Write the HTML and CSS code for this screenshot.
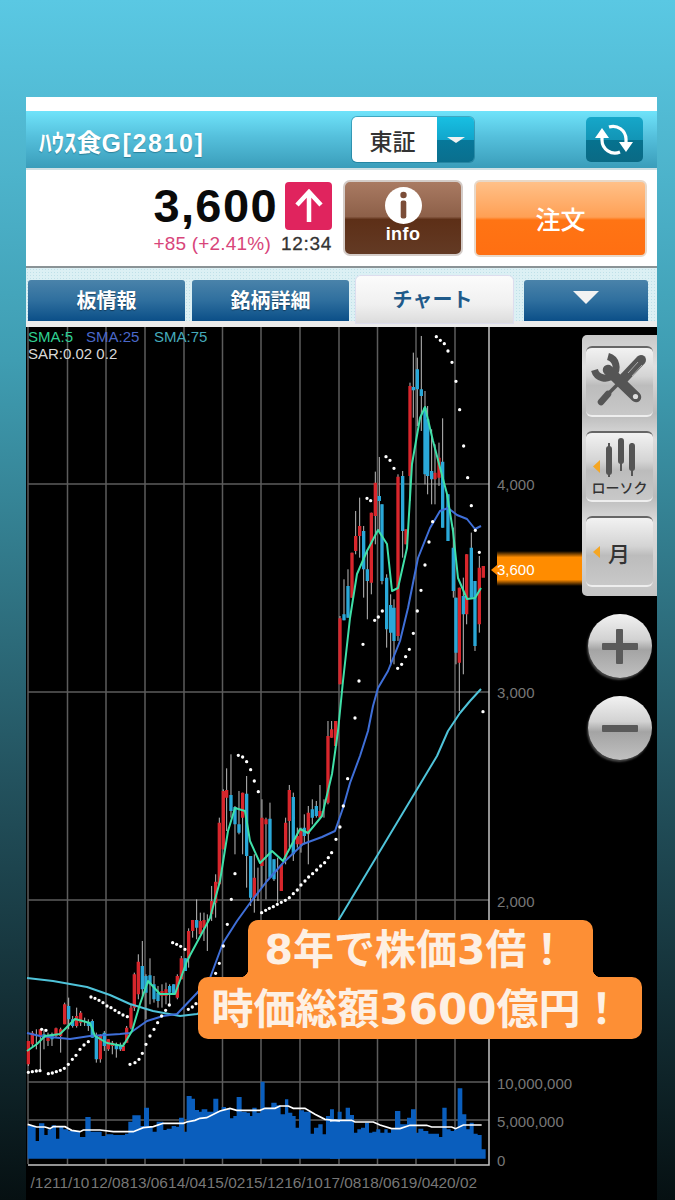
FILE: index.html
```html
<!DOCTYPE html>
<html lang="ja">
<head>
  <meta charset="UTF-8" />
  <title>ハウス食G チャート</title>
  <meta name="viewport" content="width=device-width, initial-scale=1.0"/>
  <link rel="stylesheet" href="styles.css">
</head>
<body>
  <div class="app">
    <div class="top-strip"></div>

    <!-- header -->
    <div class="header">
      <div class="title">ﾊｳｽ食<span class="title-code">G[2810]</span></div>
      <div class="market">
        <span class="market-name">東証</span>
        <span class="market-arrow"><i class="tri-down"></i></span>
      </div>
      <div class="refresh">
        <svg width="50" height="45" viewBox="0 0 50 45">
          <g fill="none" stroke="#fff" stroke-width="3.2">
            <path d="M12 18V23A13 13 0 0 0 30 35"/>
            <path d="M36 27V22A13 13 0 0 0 19 10"/>
          </g>
          <path d="M12 11L19 21H5ZM36 35L29 25H43Z" fill="#fff"/>
        </svg>
      </div>
    </div>

    <!-- price row -->
    <div class="quote-row">
      <div class="quote">
        <div class="quote-main">
          <span class="price">3,600</span>
          <span class="up-box">
            <svg width="28" height="34" viewBox="0 0 28 34"><path d="M14 33V4M2 16L14 3L26 16" fill="none" stroke="#fff" stroke-width="4.500"/></svg>
          </span>
        </div>
        <div class="quote-sub">
          <span class="change">+85 (+2.41%)</span>
          <span class="time">12:34</span>
        </div>
      </div>
      <div class="info-btn">
        <svg width="37" height="37" viewBox="0 0 37 37">
          <circle cx="18.5" cy="18.5" r="18.5" fill="#fff"/>
          <circle cx="18.5" cy="8" r="3.2" fill="#7b4d38"/>
          <rect x="15.7" y="13.500" width="5.600" height="18" rx="2" fill="#7b4d38"/>
        </svg>
        <span class="info-label">info</span>
      </div>
      <div class="order-btn">注文</div>
    </div>

    <!-- tabs -->
    <div class="tabs">
      <div class="tab">板情報</div>
      <div class="tab">銘柄詳細</div>
      <div class="tab tab-active">チャート</div>
      <div class="tab tab-more"><i class="tri-down tri-big"></i></div>
    </div>

    <!-- chart + tools -->
    <div class="chart">
      <svg class="plot" width="556" height="874" viewBox="26 326 556 874">
        <defs>
          <linearGradient id="tag" x1="0" y1="0" x2="0" y2="1">
            <stop offset="0" stop-color="#ff8c00" stop-opacity="0"/>
            <stop offset=".18" stop-color="#ff8c00"/>
            <stop offset=".82" stop-color="#ff8c00"/>
            <stop offset="1" stop-color="#ff8c00" stop-opacity="0"/>
          </linearGradient>
        </defs>

        <!-- grid -->
        <path class="grid" d="M28 326V1163M67.500 326V1163M106 326V1163M145 326V1163M184 326V1163M222.500 326V1163M261 326V1163M300 326V1163M339 326V1163M377.500 326V1163M416 326V1163M455 326V1163M28 483H489M28 691H489M28 899H489M28 1081H489M28 1119H489"/>
        <path class="axis" d="M489 326V1164H28"/>

        <!-- volume -->
        <path class="vol" transform="translate(0 1060) scale(.3333)" d="M83 293V195H107V240H117V187H133V222H143V205H155V193H168V233H178V195H190V205H205V210H240V228H256V168H272V212H305V225H318V220H340V222H375V218H385V182H397V163H422V195H432V140H447V197H458V212H470V182H490V207H500V203H515V195H528V197H537V170H552V212H560V105H575V113H585V147H597V152H605V145H622V152H640V113H655V150H665V138H678V143H690V172H700V165H710V108H725V152H740V155H750V165H757V140H770V155H782V62H794V140H814V125H830V133H842V160H855V115H865V155H877V165H887V200H897V148H912V152H932V218H942V200H955V190H968V220H978V165H990V145H1002V175H1020V293Z"/>
        <path class="vol" transform="translate(335 1060) scale(.3333)" d="M-15 293V175H8V152H20V180H32V140H45V162H57V215H67V205H78V200H90V185H102V215H112V212H124V205H136V215H148V205H158V215H168V205H180V150H196V190H216V170H228V145H243V215H250V203H265V210H280V218H312V228H322V140H335V205H347V210H357V205H368V82H382V160H394V205H404V185H416V218H428V222H440V265H452V293Z"/>
        <path class="vol-ma" transform="translate(0 1060) scale(.3333)" d="M83 190L110 198H135L150 203L160 197H195L215 208L240 212L250 207H300L340 212H400L430 200L460 197L490 187H550L560 183L585 178L600 172L620 170L660 150L690 142L710 148H780L795 142H825L840 135H865L880 142H915L945 160L975 175L1020 180"/>
        <path class="vol-ma" transform="translate(335 1060) scale(.3333)" d="M-15 180L0 178H50L60 183H115L135 192L170 203H195L225 193H275L290 198H350L362 203L385 192H440"/>

        <!-- left part of the candles, 3x traced -->
        <g transform="translate(20 720) scale(.3333)">
          <path class="wick" d="M25 960V1035M37 930V980M49 925V985M61 925V1050M72 925V985M84 935V975M96 935V975M108 920V950M122 920V995M134 845V910M146 830V925M158 885V920M170 860V920M182 870V915M194 890V915M205 895V930M217 895V950M229 935V1025M241 940V1025M253 930V990M265 955V990M277 960V1000M289 965V1010M301 965V990M310 965V990M320 915V965M333 850V925M343 755V870M355 700V835M367 660V830M378 760V895M390 712V850M402 765V845M414 795V860M426 790V860M438 785V850M449 790V850M461 790V820M472 760V835M484 705V775M496 712V750M506 622V740M518 597V650M530 535V655M541 575V630M552 575V660M562 580V690M575 495V600M587 460V590M598 290V480M610 205V385M620 142V330M633 100V290M645 255V400M657 210V340M668 215V400M680 165V500M692 405V555M703 400V575M714 440V540M726 235V500M738 290V535M750 245V470M762 415V480M773 410V545M784 430V510M797 290V430M808 192V380M820 215V420M832 320V380M843 320V395M853 280V370M865 255V430M877 235V310M889 240V290M900 192V290M912 235V290M924 0V250M935 0V50M947 0V75"/>
          <path class="bar-red" d="M25 960V1030M37 935V970M61 925V945M84 945V960M108 922V945M122 925V945M134 850V910M170 885V915M182 875V905M241 945V1015M265 955V985M277 965V975M310 975V990M320 920V965M333 860V920M343 760V860M355 722V820M426 810V825M438 805V825M472 765V830M484 712V775M506 630V712M518 597V630M541 600V640M552 597V620M575 540V580M587 482V545M598 305V490M610 210V385M620 207V230M668 215V290M703 470V530M726 290V435M738 295V310M784 432V510M797 305V410M808 207V300M832 345V370M843 325V370M865 275V340M900 270V290M924 45V245M935 25V50M947 0V75"/>
          <path class="bar-blue" d="M72 940V950M96 940V955M146 855V895M158 895V915M205 905V915M217 900V950M229 945V1015M253 935V975M289 970V985M301 975V985M367 735V805M378 765V815M390 763V790M402 790V835M414 815V840M449 795V815M461 790V820M496 712V750M530 597V620M633 222V270M645 258V310M657 310V335M680 218V405M692 405V530M750 293V470M762 415V475M820 228V400M853 320V345M877 265V290M889 255V285"/>
        </g>

        <!-- right part of the candles -->
        <g transform="translate(320 330) scale(.3333)">
          <path class="wick" d="M60 855V1060M72 745V868M84 715V860M96 665V800M107 540V670M119 500V680M131 585V800M142 655V865M154 545V790M166 422V640M178 378V600M186 520V760M200 730V950M212 790V1005M222 805V1000M234 430V930M248 420V680M258 595V640M270 155V510M280 65V260M292 80V285M304 15V300M315 180V460M323 225V490M335 295V520M345 340V520M357 335V465M368 262V590M384 490V630M400 590V800M408 800V1000M418 770V1140M430 740V1030M440 670V880M454 605V800M465 750V960M478 675V905"/>
          <path class="bar-red" d="M60 862V1060M96 665V800M107 615V660M119 585V615M154 545V755M166 455V555M234 437V915M258 595V640M270 165V435M345 425V445M357 380V440M418 770V995M440 670V850M478 710V880M490 705V740"/>
          <path class="bar-blue" d="M72 850V868M84 765V860M131 600V715M142 715V750M178 495V510M186 520V750M200 740V895M212 822V905M222 830V930M248 435V600M280 168V178M292 115V175M304 175V195M315 230V430M323 265V435M335 420V445M368 392V590M384 490V630M400 650V780M408 800V965M430 795V850M454 650V800M465 750V945"/>
        </g>

        <!-- moving averages -->
        <polyline class="sma75" points="27,977 53,980 87,986 110,994 130,1003 153,1010 180,1015 197,1013 250,990 300,960 338,920 350,900 365,875 380,850 395,825 410,800 425,775 437,755 448,730 460,712 470,700 481,688"/>
        <polyline class="sma25" points="27,1032 40,1035 70,1038 90,1035 120,1033 130,1032 147,1020 163,1015 177,1013 197,992 210,977 223,942 237,920 250,902 267,880 283,862 303,843 322,836 335,830 343,807 350,782 360,755 368,730 373,705 378,687 388,670 400,640 408,607 418,557 430,527 440,510 448,507 457,514 467,518 475,528 481,525"/>
        <polyline class="sma5" points="27,1050 37,1043 45,1035 60,1033 75,1018 90,1022 95,1035 107,1042 123,1045 132,1030 140,1003 148,980 160,993 175,993 187,960 210,917 220,880 228,830 235,807 245,810 250,840 260,862 272,850 283,860 300,828 308,832 322,815 332,773 338,730 343,680 350,617 357,573 367,550 378,529 387,543 392,590 398,587 407,547 412,463 420,417 425,406 433,440 447,493 453,530 458,577 467,598 475,597 481,587"/>

        <!-- parabolic SAR -->
        <path class="sar" transform="translate(20 720) scale(.3333)" d="M25 1054h0M37 1052h0M49 1050h0M60 1049h0M65 925h0M78 928h0M85 1058h0M97 1056h0M109 1052h0M121 1048h0M133 1042h0M145 1030h0M157 1015h0M168 1003h0M180 985h0M192 972h0M205 962h0M213 828h0M225 832h0M237 838h0M249 845h0M261 855h0M273 860h0M285 868h0M297 875h0M309 882h0M322 887h0M330 1030h0M345 1025h0M357 1015h0M367 997h0M378 970h0M390 945h0M402 925h0M413 905h0M425 885h0M437 868h0M448 852h0M458 665h0M470 670h0M482 676h0M495 685h0M505 865h0M517 858h0M528 848h0M587 757h0M598 727h0M610 675h0M622 610h0M634 535h0M645 458h0M655 103h0M668 108h0M680 122h0M692 146h0M703 180h0M715 212h0M725 575h0M737 568h0M748 562h0M760 557h0M772 550h0M784 544h0M796 538h0M808 530h0M820 518h0M832 507h0M843 492h0M855 480h0M866 468h0M878 458h0M890 447h0M902 435h0M914 425h0M925 410h0M935 395h0M948 355h0M960 318h0M970 255h0M983 173h0"/>
        <path class="sar" transform="translate(320 330) scale(.3333)" d="M349 17h0M361 28h0M373 38h0M384 60h0M396 94h0M408 151h0M419 236h0M431 345h0M443 440h0M454 524h0M466 598h0M478 664h0M489 1142h0M105 1161h0M117 1050h0M129 940h0M164 868h0M175 858h0M187 840h0M233 1012h0M245 1000h0M257 977h0M268 955h0M280 907h0M292 840h0M303 778h0M315 702h0M327 633h0M338 572h0M198 377h0M210 388h0M222 412h0M141 502h0M152 509h0"/>

        <!-- last price tag -->
        <rect x="497" y="550" width="85" height="35" fill="url(#tag)"/>
        <path d="M491 569L497 564V574Z" fill="#ff8c00"/>

        <!-- legend -->
        <text class="legend leg-5" x="28" y="341">SMA:5</text>
        <text class="legend leg-25" x="86" y="341">SMA:25</text>
        <text class="legend leg-75" x="154" y="341">SMA:75</text>
        <text class="legend leg-sar" x="28" y="358">SAR:0.02 0.2</text>

        <!-- right axis -->
        <text class="tick" x="497" y="489">4,000</text>
        <text class="tick tick-now" x="497" y="574">3,600</text>
        <text class="tick" x="497" y="697">3,000</text>
        <text class="tick" x="497" y="906">2,000</text>
        <text class="tick" x="497" y="1088">10,000,000</text>
        <text class="tick" x="497" y="1126">5,000,000</text>
        <text class="tick" x="497" y="1165">0</text>

        <!-- date axis -->
        <text class="date" x="30.600" y="1187">/12</text>
        <text class="date" x="52" y="1187">11/10</text>
        <text class="date" x="90.700" y="1187">12/08</text>
        <text class="date" x="129.400" y="1187">13/06</text>
        <text class="date" x="168.100" y="1187">14/04</text>
        <text class="date" x="206.800" y="1187">15/02</text>
        <text class="date" x="245.500" y="1187">15/12</text>
        <text class="date" x="284.200" y="1187">16/10</text>
        <text class="date" x="322.900" y="1187">17/08</text>
        <text class="date" x="361.600" y="1187">18/06</text>
        <text class="date" x="400.300" y="1187">19/04</text>
        <text class="date" x="438.500" y="1187">20/02</text>
      </svg>

      <div class="tools">
        <div class="tool-panel">
          <div class="tool-btn">
            <svg width="60" height="60" viewBox="0 0 60 60">
              <g fill="none" stroke="#555">
                <path d="M51 8L34 26" stroke-width="10" stroke-linecap="round"/>
                <path d="M34 26L17 43" stroke-width="3.500"/>
                <path d="M18 42L11 50" stroke-width="6.500" stroke-linecap="round"/>
                <path d="M18 4.500A11 11 0 1 1 4.500 18" stroke-width="7"/>
                <path d="M18 18L46 45" stroke-width="10.500" stroke-linecap="round"/>
              </g>
              <path d="M48 10L38 21M52 13L42 24" fill="none" stroke="#aaa" stroke-width="1"/>
              <circle cx="45.500" cy="44.500" r="2.600" fill="#ddd"/>
            </svg>
          </div>
          <div class="tool-btn tool-candle">
            <svg width="60" height="47" viewBox="0 0 60 47">
              <path d="M19 10V44M31 6V38M42 10V43" stroke="#555" stroke-width="2"/>
              <path d="M19 16V39M31 8V28M42 13V35" stroke="#555" stroke-width="6" stroke-linecap="round"/>
              <path d="M10 27L3 33.500L10 40Z" fill="#f5a623"/>
            </svg>
            <span class="tool-label">ローソク</span>
          </div>
          <div class="tool-btn tool-month">
            <i class="tri-left"></i>
            <span class="month">月</span>
          </div>
        </div>
        <div class="zoom-btn"><i class="plus"></i></div>
        <div class="zoom-btn"><i class="minus"></i></div>
      </div>

      <!-- callout over the chart -->
      <div class="callout">
        <div class="callout-line callout-top">8年で株価3倍！</div>
        <div class="callout-line callout-bottom">時価総額3600億円！</div>
      </div>
    </div>
  </div>
</body>
</html>
```

FILE: styles.css
```css
html, body {
  margin: 0;
  padding: 0;
  height: 1200px;
  overflow: hidden;
}

body {
  font-family: "Liberation Sans", "Noto Sans CJK JP", sans-serif;
  background: linear-gradient(180deg, #5ac8e3 0%, #3f9db2 30%, #23525e 65%, #061012 100%);
}

.app {
  width: 631px;
  margin: 97px 0 0 26px;
}

.top-strip {
  height: 14px;
  background-color: #fff;
}

/* header */
.header {
  display: flex;
  align-items: center;
  height: 57px;
  background: linear-gradient(180deg, #6fe3fa 0%, #55c0dc 45%, #3a9dba 100%);
}

.title {
  flex: 1;
  padding: 3px 0 0 13px;
  color: #fff;
  font-size: 25px;
  font-weight: 700;
  text-shadow: 0 1px 1px rgba(0, 60, 80, 0.4);
}

.title-code {
  letter-spacing: 1.6px;
}

.market {
  display: flex;
  width: 122px;
  height: 45px;
  margin-right: 112px;
  border-radius: 5px;
  overflow: hidden;
  box-shadow: 0 0 0 1px rgba(0, 90, 120, 0.4);
}

.market-name {
  flex: 1;
  display: flex;
  align-items: center;
  justify-content: center;
  padding-right: 4px;
  background-color: #fff;
  color: #333;
  font-size: 23px;
  font-weight: 500;
}

.market-arrow {
  display: flex;
  align-items: center;
  justify-content: center;
  width: 37px;
  background: linear-gradient(180deg, #18bfe2 0%, #11a6cc 50%, #07789a 52%, #0a6f8e 100%);
}

.tri-down {
  display: block;
  width: 0;
  height: 0;
  border-left: 9px solid transparent;
  border-right: 9px solid transparent;
  border-top: 6px solid #f2f2f2;
}

.refresh {
  display: flex;
  align-items: center;
  justify-content: center;
  width: 57px;
  height: 45px;
  margin-right: 14px;
  border-radius: 5px;
  background: linear-gradient(180deg, #16a7c9 0%, #1295b6 50%, #06728f 52%, #0a6a85 100%);
}

/* price row */
.quote-row {
  display: flex;
  align-items: center;
  gap: 11px;
  height: 96px;
  padding-right: 10px;
  background-color: #fff;
  border-top: 2px solid #cfe0e4;
  border-bottom: 2px solid #8a9396;
  box-sizing: content-box;
}

.quote {
  flex: 1;
  display: flex;
  flex-direction: column;
  align-items: flex-end;
}

.quote-main {
  display: flex;
  align-items: center;
  gap: 7px;
}

.price {
  color: #0a0a0a;
  font-size: 47px;
  font-weight: 700;
  line-height: 46px;
  letter-spacing: 1.4px;
}

.up-box {
  display: flex;
  align-items: center;
  justify-content: center;
  width: 47px;
  height: 48px;
  border-radius: 4px;
  background-color: #e0245e;
}

.quote-sub {
  display: flex;
  gap: 10px;
  margin-top: 4px;
  font-size: 19px;
  line-height: 20px;
}

.change {
  color: #d8457a;
  letter-spacing: 0.2px;
}

.time {
  color: #333;
  letter-spacing: 0.7px;
  -webkit-text-stroke: 0.3px #333;
}

.info-btn {
  display: flex;
  flex-direction: column;
  align-items: center;
  width: 120px;
  height: 76px;
  padding-top: 5px;
  box-sizing: border-box;
  border: 2px solid #d4ccc8;
  border-radius: 7px;
  background: linear-gradient(180deg, #a97a62 0%, #8d6049 48%, #5d2f17 52%, #633a24 100%);
}

.info-label {
  color: #fff;
  font-size: 18px;
  font-weight: 700;
  line-height: 20px;
  letter-spacing: 0.4px;
}

.order-btn {
  display: flex;
  align-items: center;
  justify-content: center;
  width: 173px;
  height: 77px;
  box-sizing: border-box;
  border: 2px solid #e8d8c8;
  border-radius: 6px;
  background: linear-gradient(180deg, #ffc088 0%, #ffa055 48%, #ff7414 52%, #ff6f12 100%);
  color: #fff;
  font-size: 25px;
  font-weight: 500;
}

/* tabs */
.tabs {
  display: flex;
  align-items: flex-end;
  gap: 7px;
  height: 59px;
  padding-left: 2px;
  box-sizing: border-box;
  border-bottom: 6px solid #ececec;
  background-color: #dcf0f4;
  background-image: radial-gradient(#bfe0e8 1px, transparent 1px);
  background-size: 3px 3px;
}

.tab {
  display: flex;
  align-items: center;
  justify-content: center;
  width: 157px;
  height: 41px;
  padding-bottom: 3px;
  box-sizing: border-box;
  border-radius: 3px 3px 0 0;
  background: linear-gradient(180deg, #4a83aa 0%, #2f6f9e 50%, #0b4f88 100%);
  color: #fff;
  font-size: 20px;
  font-weight: 700;
  text-shadow: 0 1px 1px rgba(0, 0, 0, 0.4);
}

.tab-active {
  position: relative;
  height: 47px;
  margin-bottom: -2px;
  padding-right: 4px;
  border-radius: 5px 5px 0 0;
  background: linear-gradient(180deg, #fbfbfb 0%, #f0f0f0 60%, #dcdcdc 100%);
  box-shadow: 0 0 0 1px #dde;
  color: #1f5a8a;
  text-shadow: none;
}

.tab-more {
  width: 124px;
  margin-left: 4px;
}

.tri-big {
  border-left-width: 13px;
  border-right-width: 13px;
  border-top-width: 13px;
  margin-bottom: 3px;
}

/* chart */
.chart {
  position: relative;
  display: flex;
  height: 874px;
  background-color: #000;
}

.plot {
  display: block;
  flex: none;
}

.grid {
  fill: none;
  stroke: #5c5c5c;
  stroke-width: 1.5;
}

.axis {
  fill: none;
  stroke: #c4c4c4;
  stroke-width: 1.5;
}

.vol {
  fill: #0a5ebd;
}

.vol-ma {
  fill: none;
  stroke: #fff;
  stroke-width: 5;
}

.wick {
  fill: none;
  stroke: #bdbdbd;
  stroke-width: 3;
}

.bar-red {
  fill: none;
  stroke: #d8262c;
  stroke-width: 10;
}

.bar-blue {
  fill: none;
  stroke: #2aa8d8;
  stroke-width: 10;
}

.sma5, .sma25, .sma75 {
  fill: none;
  stroke-width: 2;
  stroke-linejoin: round;
}

.sma5 {
  stroke: #3fe0a8;
}

.sma25 {
  stroke: #3f6fd8;
}

.sma75 {
  stroke: #4fc3d9;
}

.sar {
  fill: none;
  stroke: #fff;
  stroke-width: 10;
  stroke-linecap: round;
}

.legend {
  font-size: 15px;
}

.leg-5 {
  fill: #2fcf92;
}

.leg-25 {
  fill: #4a68c8;
}

.leg-75 {
  fill: #45a9ba;
}

.leg-sar {
  fill: #d8d8d8;
}

.tick {
  fill: #777;
  font-size: 15px;
}

.tick-now {
  fill: #fff;
}

.date {
  fill: #777;
  font-size: 15.4px;
}

/* tools on the right */
.tools {
  flex: none;
  display: flex;
  flex-direction: column;
  align-items: center;
  width: 75px;
  padding-top: 8px;
  gap: 18px;
}

.tool-panel {
  display: flex;
  flex-direction: column;
  gap: 14px;
  width: 75px;
  padding: 11px 4px 9px;
  box-sizing: border-box;
  border-radius: 5px 0 0 5px;
  background: linear-gradient(180deg, #c9c9c9 0%, #e0e0e0 12%, #bbb 30%, #dcdcdc 40%, #bbb 62%, #ddd 72%, #c4c4c4 100%);
}

.tool-btn {
  display: flex;
  align-items: center;
  justify-content: center;
  width: 67px;
  height: 71px;
  box-sizing: border-box;
  border-top: 2px solid #666;
  border-bottom: 2px solid #eee;
  border-radius: 6px;
  background: linear-gradient(180deg, #f2f2f2 0%, #d4d4d4 42%, #bcbcbc 56%, #c8c8c8 100%);
}

.tool-candle {
  flex-direction: column;
  justify-content: flex-start;
}

.tool-label {
  color: #333;
  font-size: 14px;
  line-height: 17px;
  font-weight: 500;
  white-space: nowrap;
}

.tool-month {
  justify-content: flex-start;
  padding-left: 7px;
  gap: 8px;
}

.tri-left {
  display: block;
  width: 0;
  height: 0;
  border-top: 6px solid transparent;
  border-bottom: 6px solid transparent;
  border-right: 7px solid #f5a623;
}

.month {
  color: #333;
  font-size: 22px;
  font-weight: 500;
}

.zoom-btn {
  position: relative;
  width: 64px;
  height: 64px;
  border-radius: 50%;
  background: linear-gradient(180deg, #f2f2f2 0%, #d2d2d2 40%, #a4a4a4 56%, #c0c0c0 100%);
  box-shadow: -1px 2px 2px #444;
}

.plus::before, .plus::after, .minus::before {
  content: "";
  position: absolute;
  border-radius: 1px;
  background-color: #5a5a5a;
}

.plus::before, .minus::before {
  left: 14px;
  top: 29px;
  width: 36px;
  height: 7px;
}

.plus::after {
  left: 28.500px;
  top: 15px;
  width: 7px;
  height: 35px;
}

/* orange callout */
.callout {
  position: absolute;
  left: 172px;
  top: 593px;
  width: 444px;
  display: flex;
  flex-direction: column;
  align-items: center;
  color: #fdf0e4;
  font-family: "DejaVu Sans", "Noto Sans CJK JP", sans-serif;
  font-weight: 700;
  font-size: 41px;
  white-space: nowrap;
}

.callout-line {
  position: relative;
  display: flex;
  align-items: center;
  justify-content: center;
  box-sizing: border-box;
  padding-bottom: 6px;
  background-color: #fd8f35;
}

.callout-top {
  width: 345px;
  height: 57px;
  padding-right: 8px;
  border-radius: 10px 10px 0 0;
}

.callout-top::before, .callout-top::after {
  content: "";
  position: absolute;
  bottom: 0;
  width: 8px;
  height: 8px;
}

.callout-top::before {
  left: -8px;
  background: radial-gradient(circle at 0 0, transparent 8px, #fd8f35 8.5px);
}

.callout-top::after {
  right: -8px;
  background: radial-gradient(circle at 100% 0, transparent 8px, #fd8f35 8.5px);
}

.callout-bottom {
  width: 444px;
  height: 62px;
  padding-right: 6px;
  font-size: 42px;
  border-radius: 10px;
}
```
